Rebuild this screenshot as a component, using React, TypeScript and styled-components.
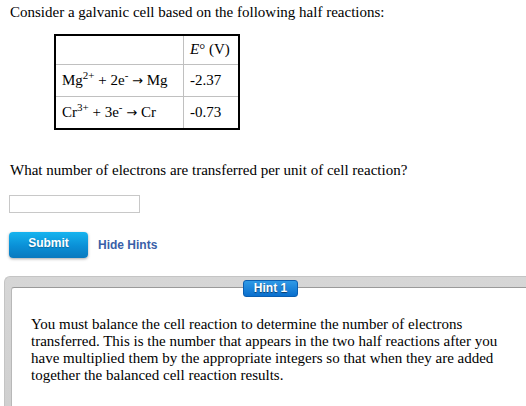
import styled, { createGlobalStyle } from "styled-components";

const GlobalStyle = createGlobalStyle`
  body {
    margin: 0;
    background: #ffffff;
    font-family: "Liberation Serif", "Times New Roman", serif;
    font-size: 15px;
    color: #000;
  }
`;

const Page = styled.div`
  padding: 4px 0 0 10px;
  overflow: hidden;
  height: 406px;
  box-sizing: border-box;
`;

const Para = styled.p`
  margin: 0;
  line-height: 17px;
`;

const ReactionTable = styled.table`
  border-collapse: collapse;
  border: 2px solid #000;
  margin: 13px 0 0 44px;
  line-height: 17px;
  table-layout: fixed;

  td {
    border: 1px solid #c0c0c0;
    padding: 0 6px;
    vertical-align: middle;
    white-space: nowrap;
  }

  sup {
    font-size: 11px;
    line-height: 0;
  }
`;

const Row = styled.tr<{ $h: number }>`
  height: ${(p) => p.$h}px;
`;

const Cell = styled.td<{ $wide?: boolean }>`
  width: ${(p) => (p.$wide ? "115px" : "42px")};
`;

const Arrow = styled.span`
  font-family: "DejaVu Sans", sans-serif;
  font-size: 13px;
`;

const Question = styled(Para)`
  margin-top: 32px;
`;

const AnswerInput = styled.input`
  display: block;
  margin: 16px 0 0 -1px;
  width: 131px;
  height: 18px;
  box-sizing: border-box;
  border: 1px solid #c8c8c8;
  padding: 0 3px;
  font: inherit;
  outline: none;
`;

const Actions = styled.div`
  display: flex;
  align-items: center;
  gap: 10px;
  margin: 19px 0 0 -1px;
`;

const SubmitButton = styled.button`
  width: 79px;
  height: 26px;
  border: none;
  border-radius: 4px;
  background: linear-gradient(#16b4ef, #0a8fd6 55%, #0a79be);
  box-shadow: 0 1px 3px rgba(0, 0, 0, 0.35);
  color: #fff;
  font-family: "Liberation Sans", Arial, sans-serif;
  font-weight: bold;
  font-size: 12px;
  padding: 0 0 4px;
  text-shadow: 0 1px 1px rgba(0, 0, 0, 0.25);
`;

const LinkText = styled.span`
  font-family: "Liberation Sans", Arial, sans-serif;
  font-weight: bold;
  font-size: 12px;
  color: #3a5fa8;
  margin-bottom: 1px;
`;

const HintFrame = styled.div`
  position: relative;
  margin: 18px 0 0 -6px;
  background: linear-gradient(#d6d6d6, #cfcfcf);
  border-radius: 6px 0 0 0;
  border: 1px solid #c4c4c4;
  border-right: none;
  padding: 10px 0 0 6px;
  height: 140px;
`;

const HintPanel = styled.div`
  background: #fff;
  border-top: 1px solid #9a9a9a;
  border-left: 1px solid #b8b8b8;
  border-radius: 3px 0 0 0;
  height: 100%;
  padding: 28px 0 0 19px;
  box-sizing: border-box;
`;

const HintText = styled(Para)`
  width: 475px;
`;

const HintBadge = styled.div`
  position: absolute;
  left: 238px;
  top: 3px;
  width: 55px;
  height: 17px;
  border-radius: 3px;
  background: linear-gradient(#2f9ae6, #0a6fce);
  border: 1px solid #0a5eb0;
  box-sizing: border-box;
  color: #fff;
  font-family: "Liberation Sans", Arial, sans-serif;
  font-weight: bold;
  font-size: 12px;
  line-height: 15px;
  text-align: center;
  text-shadow: 0 1px 1px rgba(0, 0, 0, 0.5);
`;

export default function App() {
  return (
    <>
      <GlobalStyle />
      <Page>
        <Para>Consider a galvanic cell based on the following half reactions:</Para>
        <ReactionTable>
          <tbody>
            <Row $h={29}>
              <Cell $wide />
              <Cell>
                <i>E</i>° (V)
              </Cell>
            </Row>
            <Row $h={32}>
              <Cell $wide>
                Mg<sup>2+</sup> + 2e<sup>-</sup> <Arrow>→</Arrow> Mg
              </Cell>
              <Cell>-2.37</Cell>
            </Row>
            <Row $h={33}>
              <Cell $wide>
                Cr<sup>3+</sup> + 3e<sup>-</sup> <Arrow>→</Arrow> Cr
              </Cell>
              <Cell>-0.73</Cell>
            </Row>
          </tbody>
        </ReactionTable>
        <Question>What number of electrons are transferred per unit of cell reaction?</Question>
        <AnswerInput type="text" />
        <Actions>
          <SubmitButton>Submit</SubmitButton>
          <LinkText>Hide Hints</LinkText>
        </Actions>
        <HintFrame>
          <HintBadge>Hint 1</HintBadge>
          <HintPanel>
            <HintText>
              You must balance the cell reaction to determine the number of electrons
              transferred. This is the number that appears in the two half reactions after you
              have multiplied them by the appropriate integers so that when they are added
              together the balanced cell reaction results.
            </HintText>
          </HintPanel>
        </HintFrame>
      </Page>
    </>
  );
}
